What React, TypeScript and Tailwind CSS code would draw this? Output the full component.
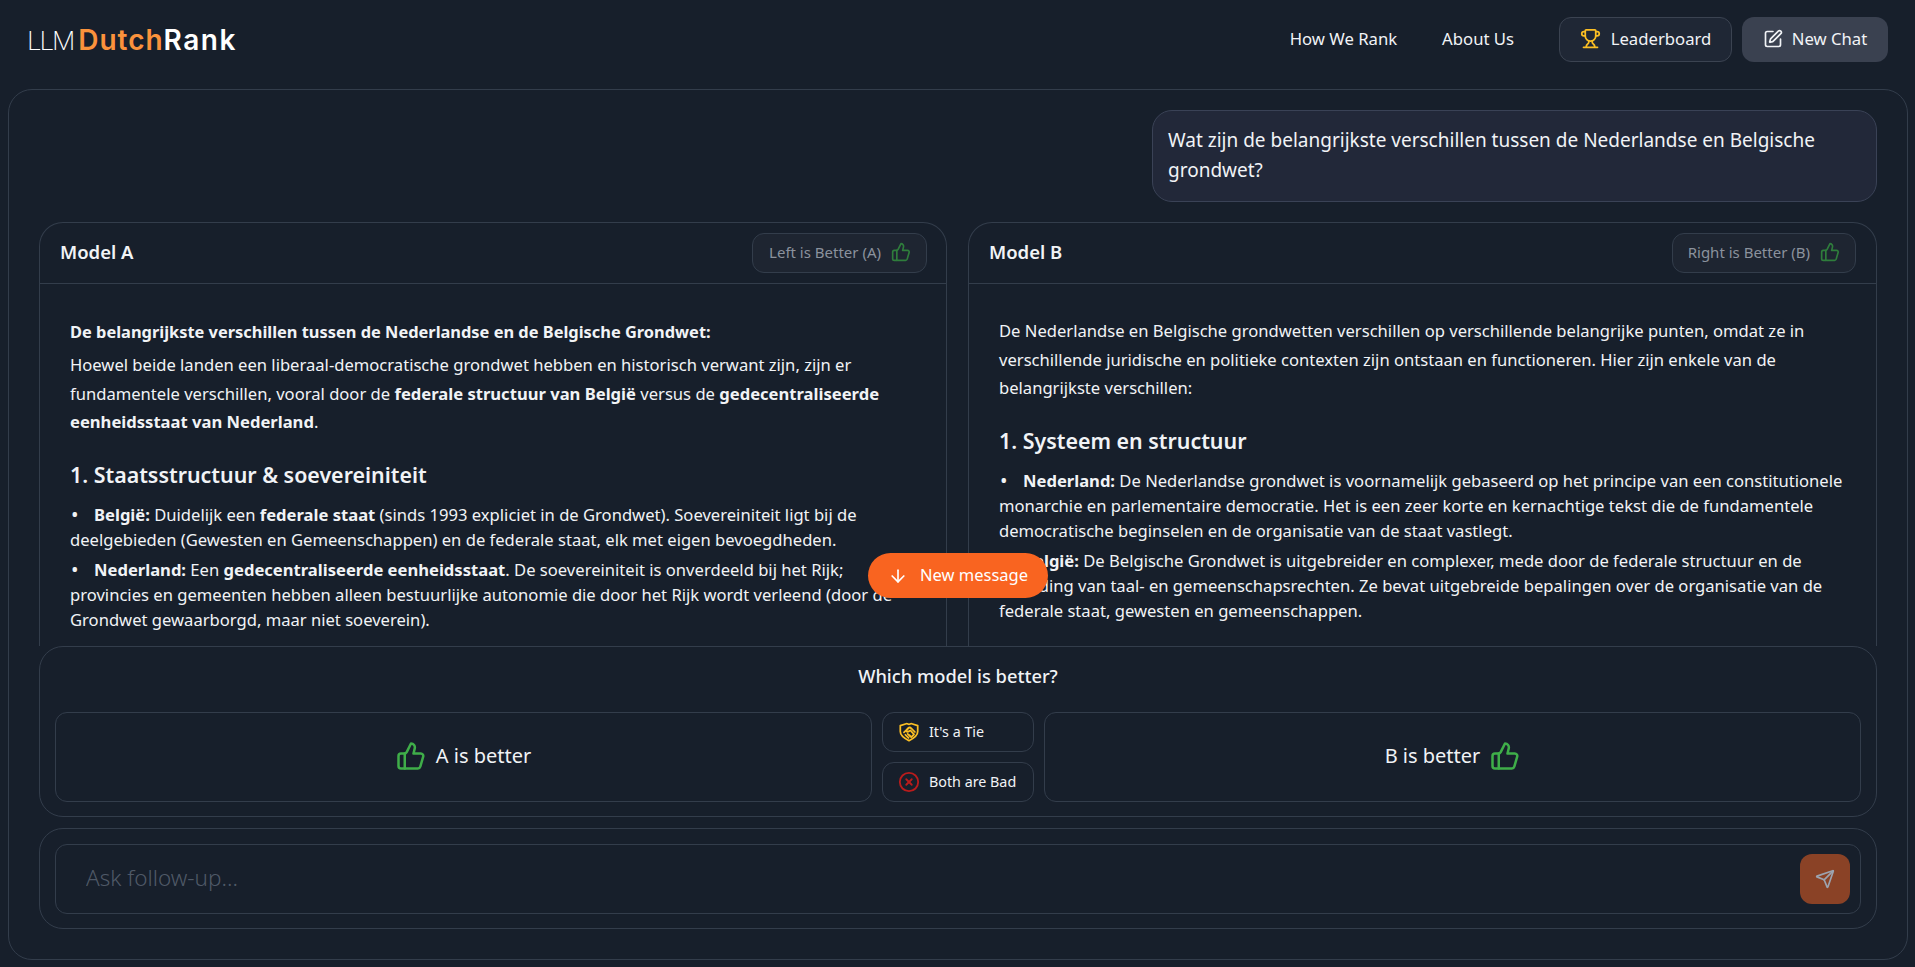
import React from 'react';
import { ArrowDown, CircleX, Send, SquarePen, ThumbsUp, Trophy } from 'lucide-react';

const bodyFont = 'font-["Noto_Sans",sans-serif]';

const Bullet: React.FC<{ children: React.ReactNode }> = ({ children }) => (
  <li className="relative mb-[5px] text-[16.6px] leading-[25px] indent-[24px]">
    <span className="absolute left-0 top-0 indent-0 pl-[1px] text-[20px]">•</span>
    {children}
  </li>
);

const ShieldHands = () => (
  <svg viewBox="0 0 24 24" width="22" height="22" fill="none" stroke="#fbbf24" strokeWidth="1.9" strokeLinecap="round" strokeLinejoin="round">
    <path d="M2.5 5L9 3c1.5-.4 2 .8 3 .8S13.500 2.600 15 3l6.500 2v6.500c0 4.500-4.500 7.500-9.500 10-5-2.500-9.500-5.500-9.500-10z" />
    <path d="M6.500 12.500l4.500-4.500c1-1 2.500-1 3.500 0l4 4" />
    <path d="M11 8l-2 3c.8 1 2 1 3 .2l1.500-1 4 4.300-3 3-2-2M8 15l3.500 3.500M10.500 14l3 3" />
  </svg>
);

export default function App() {
  return (
    <div className={`h-[967px] flex flex-col overflow-hidden bg-[#171f2b] text-[#f1f3f6] ${bodyFont}`}>
      <header className="h-[89px] shrink-0 flex items-center justify-between pl-[27px] pr-[27px] pb-[10px]">
        <div className='text-[28px] leading-none font-["Inter",sans-serif] text-white'>
          <span className="text-[26px] font-extralight tracking-[-2.2px]">LLM </span>
          <span className="font-semibold tracking-[1px] text-[#fb923c]">Dutch</span>
          <span className="font-semibold tracking-[1.5px]">Rank</span>
        </div>
        <nav className="flex items-center text-[16.7px]">
          <a className="mr-[45px] -mt-[2px]">How We Rank</a>
          <a className="mr-[45px] -mt-[2px]">About Us</a>
          <button className="w-[173px] h-[45px] mr-[10px] pb-[2px] flex items-center justify-center gap-[10px] rounded-xl border border-[#3b4351] bg-[#1f2735]">
            <Trophy size={21} className="text-[#fbbf24]" />
            Leaderboard
          </button>
          <button className="w-[146px] h-[45px] pb-[2px] flex items-center justify-center gap-[9px] rounded-xl bg-[#3a4150]">
            <SquarePen size={20} />
            New Chat
          </button>
        </nav>
      </header>

      <main className="flex-1 min-h-0 ml-[8px] mr-[7px] mb-[7px] flex flex-col rounded-3xl border border-[#333d4b] px-[30px] pt-[20px] pb-[30px]">
        <div className="flex justify-end mb-[20px] shrink-0">
          <div className="w-[725px] h-[92px] rounded-[20px] border border-[#3a4256] bg-[#222839] px-[15px] pt-[14px] text-[19px] leading-[30px]">
            Wat zijn de belangrijkste verschillen tussen de Nederlandse en Belgische grondwet?
          </div>
        </div>

        <div className="relative flex-1 min-h-0 grid grid-cols-[908px_1fr] gap-[21px]">
          <section className="min-h-0 overflow-hidden rounded-t-3xl border border-b-0 border-[#333d4b]">
            <div className="h-[61px] flex items-center justify-between border-b border-[#333d4b] pl-[20px] pr-[19px]">
              <h2 className="text-[18.5px] font-semibold -mt-[2px]">Model A</h2>
              <button className="h-[40px] pb-[2px] flex items-center gap-[10px] pl-[16px] pr-[15px] rounded-xl border border-[#333d4b] bg-[#1e2531] text-[15px] text-[#8b929d]">
                Left is Better (A)
                <ThumbsUp size={20} className="text-[#2f7d3c]" />
              </button>
            </div>
            <div className="pl-[30px] pr-[30px] pt-[34px]">
              <p className="mb-[4px] font-bold text-[16.4px] leading-[28.8px]">De belangrijkste verschillen tussen de Nederlandse en de Belgische Grondwet:</p>
              <p className="text-[16.6px] leading-[28.8px] whitespace-nowrap">
                Hoewel beide landen een liberaal-democratische grondwet hebben en historisch verwant zijn, zijn er<br />
                fundamentele verschillen, vooral door de <b>federale structuur van België</b> versus de <b>gedecentraliseerde</b><br />
                <b>eenheidsstaat van Nederland</b>.
              </p>
              <h3 className="mt-[23px] mb-[12px] text-[21.4px] leading-[30px] font-semibold">1. Staatsstructuur &amp; soevereiniteit</h3>
              <ul className="whitespace-nowrap">
                <Bullet><b>België:</b> Duidelijk een <b>federale staat</b> (sinds 1993 expliciet in de Grondwet). Soevereiniteit ligt bij de<br />deelgebieden (Gewesten en Gemeenschappen) en de federale staat, elk met eigen bevoegdheden.</Bullet>
                <Bullet><b>Nederland:</b> Een <b>gedecentraliseerde eenheidsstaat</b>. De soevereiniteit is onverdeeld bij het Rijk;<br />provincies en gemeenten hebben alleen bestuurlijke autonomie die door het Rijk wordt verleend (door de<br />Grondwet gewaarborgd, maar niet soeverein).</Bullet>
              </ul>
            </div>
          </section>

          <section className="min-h-0 overflow-hidden rounded-t-3xl border border-b-0 border-[#333d4b]">
            <div className="h-[61px] flex items-center justify-between border-b border-[#333d4b] pl-[20px] pr-[20px]">
              <h2 className="text-[18.5px] font-semibold -mt-[2px]">Model B</h2>
              <button className="h-[40px] pb-[2px] flex items-center gap-[10px] px-[15px] rounded-xl border border-[#333d4b] bg-[#1e2531] text-[15px] text-[#8b929d]">
                Right is Better (B)
                <ThumbsUp size={20} className="text-[#2f7d3c]" />
              </button>
            </div>
            <div className="pl-[30px] pr-[20px] pt-[33px]">
              <p className="text-[16.6px] leading-[28.5px] whitespace-nowrap">
                De Nederlandse en Belgische grondwetten verschillen op verschillende belangrijke punten, omdat ze in<br />
                verschillende juridische en politieke contexten zijn ontstaan en functioneren. Hier zijn enkele van de<br />
                belangrijkste verschillen:
              </p>
              <h3 className="mt-[23px] mb-[12px] text-[21.4px] leading-[30px] font-semibold">1. Systeem en structuur</h3>
              <ul className="whitespace-nowrap">
                <Bullet><b>Nederland:</b> De Nederlandse grondwet is voornamelijk gebaseerd op het principe van een constitutionele<br />monarchie en parlementaire democratie. Het is een zeer korte en kernachtige tekst die de fundamentele<br />democratische beginselen en de organisatie van de staat vastlegt.</Bullet>
                <Bullet><b>België:</b> De Belgische Grondwet is uitgebreider en complexer, mede door de federale structuur en de<br />scheiding van taal- en gemeenschapsrechten. Ze bevat uitgebreide bepalingen over de organisatie van de<br />federale staat, gewesten en gemeenschappen.</Bullet>
              </ul>
            </div>
          </section>

          <button className="absolute left-[829px] top-[331px] w-[180px] h-[45px] flex items-center justify-center gap-[12px] rounded-full bg-[#f96420] text-[16.5px] text-white">
            <ArrowDown size={20} />
            New message
          </button>
        </div>

        <div className="shrink-0 h-[171px] rounded-3xl border border-[#333d4b] px-[15px] pt-[12px]">
          <p className="text-center text-[18.3px] leading-[34px] font-medium">Which model is better?</p>
          <div className="mt-[19px] flex gap-[10px]">
            <button className="flex-1 h-[90px] pb-[2px] flex items-center justify-center gap-[10px] rounded-xl border border-[#333d4b] text-[20px]">
              <ThumbsUp size={30} className="text-[#3fae49]" />
              A is better
            </button>
            <div className="w-[152px] flex flex-col gap-[10px] text-[14.3px]">
              <button className="h-[40px] flex items-center gap-[9px] pl-[15px] rounded-xl border border-[#333d4b]">
                <ShieldHands />
                It's a Tie
              </button>
              <button className="h-[40px] flex items-center gap-[9px] pl-[15px] rounded-xl border border-[#333d4b]">
                <CircleX size={22} className="text-[#b91c1c]" />
                Both are Bad
              </button>
            </div>
            <button className="flex-1 h-[90px] pb-[2px] flex items-center justify-center gap-[10px] rounded-xl border border-[#333d4b] text-[20px]">
              B is better
              <ThumbsUp size={30} className="text-[#3fae49]" />
            </button>
          </div>
        </div>

        <div className="shrink-0 mt-[11px] h-[101px] rounded-3xl border border-[#333d4b] px-[15px] pt-[15px]">
          <div className="h-[70px] flex items-center rounded-xl border border-[#333d4b] pl-[30px] pr-[10px]">
            <input placeholder="Ask follow-up..." className="flex-1 pb-[2px] bg-transparent outline-none text-[22.5px] font-light placeholder:text-[#4f5967]" />
            <button className="w-[50px] h-[50px] flex items-center justify-center rounded-xl bg-[#8a4226]">
              <Send size={20} className="text-[#9ca3af]" />
            </button>
          </div>
        </div>
      </main>
    </div>
  );
}
